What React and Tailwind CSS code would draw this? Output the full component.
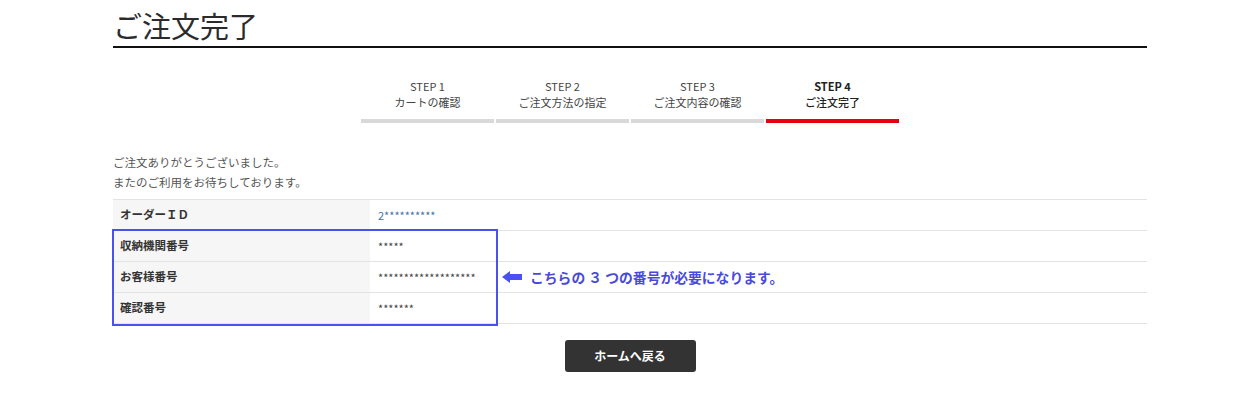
import React from 'react';

const steps = [
  { no: 'STEP 1', label: 'カートの確認' },
  { no: 'STEP 2', label: 'ご注文方法の指定' },
  { no: 'STEP 3', label: 'ご注文内容の確認' },
  { no: 'STEP 4', label: 'ご注文完了', active: true },
];

const rows = [
  { label: 'オーダーＩＤ', value: '2**********', link: true },
  { label: '収納機関番号', value: '*****' },
  { label: 'お客様番号', value: '*******************' },
  { label: '確認番号', value: '*******' },
];

export default function App() {
  return (
    <div
      className="min-h-[400px] bg-white text-[#333]"
      style={{ fontFamily: '"Noto Sans CJK JP", "Noto Sans", sans-serif' }}
    >
      <div className="mx-auto w-[1034px]">
        <h1 className="border-b-2 border-[#111] pt-[5px] pb-[1px] text-[29px] font-normal leading-[40px] text-[#2b2b2b]">
          ご注文完了
        </h1>

        <div className="mt-[30px] flex justify-center gap-[2px]">
          {steps.map(s => (
            <div key={s.no} className="w-[133px]">
              <div className={`text-center text-[11px] leading-[16px] ${s.active ? 'font-bold text-[#222]' : 'text-[#444]'}`}>
                {s.no}
              </div>
              <div className={`text-center text-[11px] leading-[16px] ${s.active ? 'font-medium text-[#222]' : 'text-[#444]'}`}>
                {s.label}
              </div>
              <div className={`mt-[9px] h-[4px] ${s.active ? 'bg-[#e60012]' : 'bg-[#d9d9d9]'}`} />
            </div>
          ))}
        </div>

        <div className="mt-[29px] text-[11.5px] leading-[20px] text-[#555]">
          <p>ご注文ありがとうございました。</p>
          <p>またのご利用をお待ちしております。</p>
        </div>

        <div className="relative mt-[7px] border-t border-[#e3e3e3]">
          {rows.map(r => (
            <div key={r.label} className="flex h-[31px] border-b border-[#e3e3e3]">
              <div className="flex w-[257px] items-center bg-[#f6f6f6] pl-[7px] text-[11.5px] font-bold text-[#333]">
                {r.label}
              </div>
              <div className={`flex items-center pl-[8px] text-[11px] ${r.link ? 'text-[#3f73a8]' : 'text-[#444]'}`}>
                {r.value}
              </div>
            </div>
          ))}

          <div className="pointer-events-none absolute left-[-1px] top-[29px] h-[97px] w-[386px] border-2 border-[#4b50f0]" />

          <div className="absolute left-[389px] top-[68px] flex h-[18px] items-center gap-[8px]">
            <svg width="20" height="12" viewBox="0 0 20 12">
              <polygon points="0,6 8,0 8,3 20,3 20,9 8,9 8,12" fill="#4b50f0" />
            </svg>
            <span className="text-[13.8px] font-bold text-[#4a4ad8]">こちらの ３ つの番号が必要になります。</span>
          </div>
        </div>

        <div className="mt-[16px] flex justify-center">
          <button className="h-[32px] w-[131px] rounded-[3px] bg-[#333] text-[12px] font-bold text-white">
            ホームへ戻る
          </button>
        </div>
      </div>
    </div>
  );
}
